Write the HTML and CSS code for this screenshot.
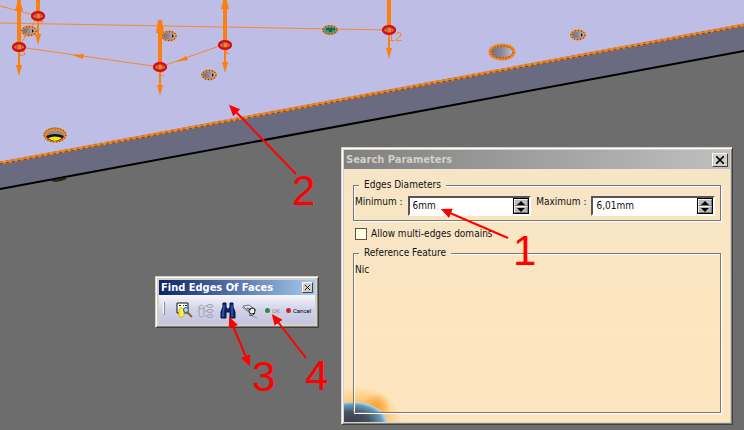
FILE: index.html
```html
<!DOCTYPE html>
<html lang="en">
<head>
    <meta charset="UTF-8">
    <meta name="viewport" content="width=device-width, initial-scale=1.0">
    <title>Search Parameters</title>
    <link rel="stylesheet" href="styles.css">
</head>
<body>

    <!-- 3D view -->
    <svg class="scene" viewBox="0 0 744 430" preserveAspectRatio="xMinYMin slice" aria-hidden="true">
        <defs>
            <linearGradient id="hole">
                <stop offset="0" stop-color="#6c6c80"/>
                <stop offset="0.5" stop-color="#8a8a9c"/>
                <stop offset="1" stop-color="#c8c8dc"/>
            </linearGradient>
            <g id="axis">
                <path d="M0 0V-60" stroke="#fb800f" stroke-width="4"/>
                <path d="M0 0V22" stroke="#fb800f" stroke-width="2"/>
                <path d="M-3 18H3L0 29Z" fill="#fb800f"/>
            </g>
            <g id="point">
                <ellipse rx="6" ry="3.7" fill="#f08030" stroke="#d80c18" stroke-width="2.4"/>
                <path d="M-4 -1H-1M2 -1H4M-3 1H-1M2 1H3" stroke="#6c5448"/>
            </g>
            <g id="small-hole">
                <ellipse rx="7" ry="4.5" fill="url(#hole)" stroke="#ef8a28" stroke-width="2"/>
                <ellipse rx="7" ry="4.5" fill="none" stroke="#302820" stroke-dasharray="1 2"/>
                <path d="M3 -2L5 0L3 2Z" fill="#15151f"/>
            </g>
        </defs>

        <rect width="744" height="430" fill="#6d6d6d"/>
        <path d="M0 0H744V51L0 189Z" fill="#6a6a80"/>
        <path d="M0 0H744V25L0 163Z" fill="#bdbde6"/>
        <path d="M0 163L744 25" stroke="#f5841a" stroke-width="3"/>
        <path d="M0 164L744 26" stroke="#57453c" stroke-dasharray="3 3"/>
        <path d="M0 162L744 24" stroke="#98785e" stroke-dasharray="2 4"/>
        <path d="M0 189L744 51" stroke="#000" stroke-width="2"/>
        <path d="M51 180Q58 182 66 178" fill="none" stroke="#22220c" stroke-width="2"/>

        <g fill="none" stroke="#f28a30">
            <path d="M0 23L389 30"/>
            <path d="M0 6L38 16L19 47L160 67L225 44"/>
        </g>
        <path d="M72 55L84 54L83 59Z" fill="#fb800f"/>
        <path d="M176 62L186 56L188 60Z" fill="#fb800f"/>

        <use href="#small-hole" x="29" y="31"/>
        <path d="M24 37L34 24" stroke="#f28a30"/>
        <use href="#small-hole" x="169" y="36"/>
        <use href="#small-hole" x="209" y="75"/>
        <use href="#small-hole" x="578" y="35"/>
        <ellipse cx="330" cy="30" rx="7" ry="4" fill="#28a080" stroke="#d08a38" stroke-width="2"/>
        <ellipse cx="330" cy="30" rx="7" ry="4" fill="none" stroke="#202820" stroke-dasharray="1 2"/>
        <path d="M326 29H335M329 31H332" stroke="#10201c"/>
        <ellipse cx="502" cy="52" rx="12" ry="7" fill="url(#hole)" stroke="#f5841a" stroke-width="3"/>
        <ellipse cx="502" cy="52" rx="11" ry="6" fill="none" stroke="#302820" stroke-dasharray="1 2"/>
        <ellipse cx="55" cy="135" rx="10" ry="6" fill="#8c8c9c" stroke="#f5841a" stroke-width="3"/>
        <ellipse cx="55" cy="135" rx="11" ry="7" fill="none" stroke="#302820" stroke-dasharray="1 2"/>
        <path d="M46 136Q55 132 64 136Q62 141 55 141Q48 141 46 136Z" fill="#111"/>
        <path d="M48 138Q55 135 62 138Q59 141 55 141Q51 141 48 138Z" fill="#f4e400"/>

        <g class="point-label">
            <text x="388" y="41">12</text>
            <text x="223" y="54">1</text>
            <text x="158" y="76">2</text>
            <text x="19" y="56">3</text>
            <text x="37" y="24">4</text>
        </g>

        <use href="#axis" x="38" y="16"/>
        <use href="#axis" x="19" y="47"/>
        <use href="#axis" x="160" y="67"/>
        <use href="#axis" x="225" y="44"/>
        <use href="#axis" x="389" y="30"/>
        <rect x="156" y="0" width="8" height="20" fill="#bdbde6"/>
        <g fill="#fb800f">
            <path d="M158 20H162L164 33H156Z"/>
            <path d="M19 -4L23 11H15Z"/>
            <path d="M225 -6L229 9H221Z"/>
        </g>
        <use href="#point" x="38" y="16"/>
        <use href="#point" x="19" y="47"/>
        <use href="#point" x="160" y="67"/>
        <use href="#point" x="225" y="45"/>
        <use href="#point" x="389" y="30"/>
    </svg>

    <!-- Toolbar -->
    <section class="window toolbar">
        <header class="titlebar">
            <h2>Find Edges Of Faces</h2>
            <button class="close" aria-label="Close"><svg viewBox="0 0 8 8"><path d="M1 1L7 7M7 1L1 7"/></svg></button>
        </header>
        <div class="tools">
            <span class="grip"></span>
            <button class="tool" aria-label="Search settings">
                <svg viewBox="0 0 18 18">
                    <path d="M2 1H13V11H2Z" fill="#fff" stroke="#111"/>
                    <path d="M4 3.5H6M8 3.5H9M10 3.5H12" stroke="#111"/>
                    <path d="M4 7Q6 4 9 7V14Q6 17 4 14Z" fill="#fbf03c" stroke="#c4b430"/>
                    <circle cx="11" cy="8" r="2.5" fill="#9fdcf0" stroke="#268"/>
                    <path d="M12 10L17 15" stroke="#94602c" stroke-width="2"/>
                </svg>
            </button>
            <button class="tool" aria-label="Edge list">
                <svg viewBox="0 0 18 18" fill="none" stroke="#a0a0ac">
                    <path d="M2 5V13Q4 17 7 13V5Q4 1 2 5ZM2 6Q4 8 7 6"/>
                    <ellipse cx="13" cy="4" rx="3" ry="1.5"/>
                    <ellipse cx="13" cy="9" rx="3" ry="1.5"/>
                    <ellipse cx="13" cy="14" rx="3" ry="1.5"/>
                    <path d="M8 4H10M8 9H10M8 14H10"/>
                </svg>
            </button>
            <button class="tool" aria-label="Find">
                <svg viewBox="0 0 18 18">
                    <path d="M4 1H7V5L8 7H10L11 5V1H14V5L16 10V16H11V10H7V16H2V10L4 5Z" fill="#10286c" stroke="#04103c"/>
                    <path d="M5 3V6L4 9V15M13 3V6L13 9V15" fill="none" stroke="#3c70c8"/>
                </svg>
            </button>
            <button class="tool" aria-label="Erase">
                <svg viewBox="0 0 18 18">
                    <path d="M2 4L8 3L15 8L11 12Z" fill="#e4e4ec" stroke="#777"/>
                    <path d="M1 5L9 11" stroke="#888"/>
                    <circle cx="11" cy="9" r="3" fill="#eee" stroke="#222"/>
                    <path d="M6 6L10 8M8 13Q12 15 14 11" fill="none" stroke="#333"/>
                    <path d="M11 14L16 16" stroke="#999"/>
                </svg>
            </button>
            <button class="tool ok"><i class="dot green"></i>OK</button>
            <button class="tool cancel"><i class="dot red"></i>Cancel</button>
        </div>
    </section>

    <!-- Dialog -->
    <section class="window dialog">
        <header class="titlebar">
            <h2>Search Parameters</h2>
            <button class="close" aria-label="Close"><svg viewBox="0 0 8 8"><path d="M0 0L8 8M8 0L0 8" stroke-width="1.6"/></svg></button>
        </header>
        <form class="content">
            <fieldset class="diameters">
                <legend>Edges Diameters</legend>
                <label for="minimum">Minimum :</label>
                <div class="spinner">
                    <input type="text" id="minimum" value="6mm">
                    <div class="steps">
                        <button type="button" aria-label="Increase minimum"><svg viewBox="0 0 8 4"><path d="M0 4L4 0L8 4Z"/></svg></button>
                        <button type="button" aria-label="Decrease minimum"><svg viewBox="0 0 8 4"><path d="M0 0H8L4 4Z"/></svg></button>
                    </div>
                </div>
                <label for="maximum">Maximum :</label>
                <div class="spinner">
                    <input type="text" id="maximum" value="6,01mm">
                    <div class="steps">
                        <button type="button" aria-label="Increase maximum"><svg viewBox="0 0 8 4"><path d="M0 4L4 0L8 4Z"/></svg></button>
                        <button type="button" aria-label="Decrease maximum"><svg viewBox="0 0 8 4"><path d="M0 0H8L4 4Z"/></svg></button>
                    </div>
                </div>
            </fieldset>
            <div class="check">
                <input type="checkbox" id="multi">
                <label for="multi">Allow multi-edges domains</label>
            </div>
            <fieldset class="reference">
                <legend>Reference Feature</legend>
                <p>Nic</p>
            </fieldset>
        </form>
    </section>

    <!-- Numbered arrows -->
    <svg class="notes" viewBox="0 0 744 430" preserveAspectRatio="xMinYMin slice">
        <defs>
            <marker id="head" markerWidth="11" markerHeight="10" refX="1" refY="5" orient="auto-start-reverse" markerUnits="userSpaceOnUse">
                <path d="M11 5L0 0V10Z"/>
            </marker>
        </defs>
        <path d="M450 213L508 238"/>
        <path d="M236 112L296 174"/>
        <path class="double" d="M233 326L246 357"/>
        <path d="M278 322L306 358"/>
        <text x="513" y="265">1</text>
        <text x="292" y="205">2</text>
        <text x="252" y="391">3</text>
        <text x="305" y="390">4</text>
    </svg>

</body>
</html>
```

FILE: styles.css
```css
* {
    box-sizing: border-box;
}
body {
    margin: 0;
    min-height: 100vh;
    overflow: hidden;
    background-color: #6d6d6d;
    font-family: "DejaVu Sans Condensed", sans-serif;
    font-size: 10px;
    line-height: 14px;
    color: #111;
}
.scene, .notes {
    position: absolute;
    top: 0;
    left: 0;
    width: 100%;
    height: 100%;
}
.point-label {
    font-family: "Liberation Sans", sans-serif;
    font-size: 13px;
    fill: #f08a38;
}
.notes {
    pointer-events: none;
    font-family: "Liberation Sans", Arial, sans-serif;
    font-size: 42px;
    fill: #f00;
}
.notes > path {
    stroke: #f00;
    stroke-width: 2;
    marker-start: url(#head);
}
.notes > .double {
    marker-end: url(#head);
}

/* Windows */
.window {
    position: absolute;
    display: flex;
    flex-direction: column;
    border: 1px solid;
    border-color: #d4d0c8 #404040 #404040 #d4d0c8;
    box-shadow: inset 1px 1px #fff, inset -1px -1px #808080;
    background-color: #d4d0c8;
}
.titlebar {
    display: flex;
    align-items: center;
    justify-content: space-between;
}
h2 {
    margin: 0;
    font-size: 11px;
}
button {
    padding: 0;
    font: inherit;
}
button svg {
    display: block;
}
.close {
    display: flex;
    align-items: center;
    justify-content: center;
    background-color: #d4d0c8;
    border: 1px solid;
    border-color: #fff #404040 #404040 #fff;
}
.close path {
    stroke: #000;
}

/* Toolbar */
.toolbar {
    left: 155px;
    top: 276px;
    width: 164px;
    padding: 3px;
}
.toolbar .titlebar {
    height: 15px;
    padding: 0 2px;
    background: linear-gradient(to right, #0a246a, #a6caf0);
    color: #fff;
}
.toolbar .close {
    width: 11px;
    height: 11px;
}
.toolbar .close svg {
    width: 7px;
}
.tools {
    display: flex;
    align-items: center;
    gap: 4px;
    height: 29px;
    padding: 2px 4px 0;
    background: linear-gradient(#f6f6fc, #d2d2ea 50%, #c4c4de);
}
.grip {
    width: 3px;
    height: 14px;
    margin: 4px 6px 0 0;
    align-self: flex-start;
    border: 1px solid;
    border-color: #fff #888 #888 #fff;
}
.tool {
    display: flex;
    align-items: center;
    gap: 2px;
    border: 0;
    background: none;
    font-family: Roboto, sans-serif;
    font-size: 6px;
}
.tool svg {
    width: 18px;
    height: 18px;
}
.ok {
    margin-left: 2px;
    color: #888;
}
.cancel {
    margin-left: 2px;
}
.dot {
    width: 5px;
    height: 5px;
    border-radius: 50%;
}
.green {
    background-color: #2c8c3c;
}
.red {
    background-color: #c02838;
}

/* Dialog */
.dialog {
    left: 341px;
    top: 147px;
    width: 392px;
    height: 278px;
    padding: 2px;
}
.dialog .titlebar {
    height: 19px;
    padding: 0 2px;
    background: linear-gradient(to right, #808080, #c0c0c0);
    color: #d4d0c8;
}
.dialog .close {
    width: 16px;
    height: 14px;
}
.dialog .close svg {
    width: 8px;
}
.content {
    flex: 1;
    display: flex;
    flex-direction: column;
    padding: 9px;
    background:
        radial-gradient(ellipse 38px 22px at 8px 100%, #3a3c46 0, #46525e 45%, #5f9cc0 78%, #b9d4dc 90%, transparent 93%),
        radial-gradient(circle 14px at 32px 238px, #f9a030, #fbb050 40%, transparent),
        radial-gradient(ellipse 42px 36px at 16px 100%, #fcb850 40%, transparent),
        linear-gradient(#f6e5c6, #fde6bf 70%);
}
fieldset {
    min-width: 0;
    margin: 0;
    padding: 0 1px;
    border: 1px solid #777;
    box-shadow: 1px 1px #fff, inset 1px 1px #fff;
}
legend {
    margin-left: 4px;
    padding: 0 5px;
    background-color: #f7e5c6;
}
.diameters {
    display: flex;
    gap: 5px;
    padding: 0 5px 4px 1px;
}
.diameters label {
    margin-top: 3px;
    white-space: nowrap;
}
.spinner {
    flex: 1;
    display: flex;
    min-width: 0;
    height: 20px;
    margin-top: 4px;
    border: 2px solid;
    border-color: #555 #fff #fff #555;
    background-color: #fff;
}
.spinner input {
    flex: 1;
    min-width: 0;
    padding: 0 3px;
    border: 0;
    font: inherit;
    color: inherit;
    background: none;
}
.steps {
    display: flex;
    flex-direction: column;
    width: 16px;
    background-color: #000;
    border: 1px solid #000;
}
.steps button {
    flex: 1;
    display: flex;
    align-items: center;
    justify-content: center;
    min-height: 0;
    border: 1px solid;
    border-color: #eee #777 #777 #eee;
    background-color: #bbb;
}
.steps svg {
    width: 8px;
    height: 4px;
}
.check {
    display: flex;
    align-items: center;
    gap: 4px;
    margin: 6px 2px 5px;
}
.check input {
    appearance: none;
    width: 12px;
    height: 12px;
    margin: 0;
    border: 1px solid #555;
    background-color: #ffffe4;
}
.reference {
    flex: 1;
}
.reference p {
    margin: 3px 0;
}
```
